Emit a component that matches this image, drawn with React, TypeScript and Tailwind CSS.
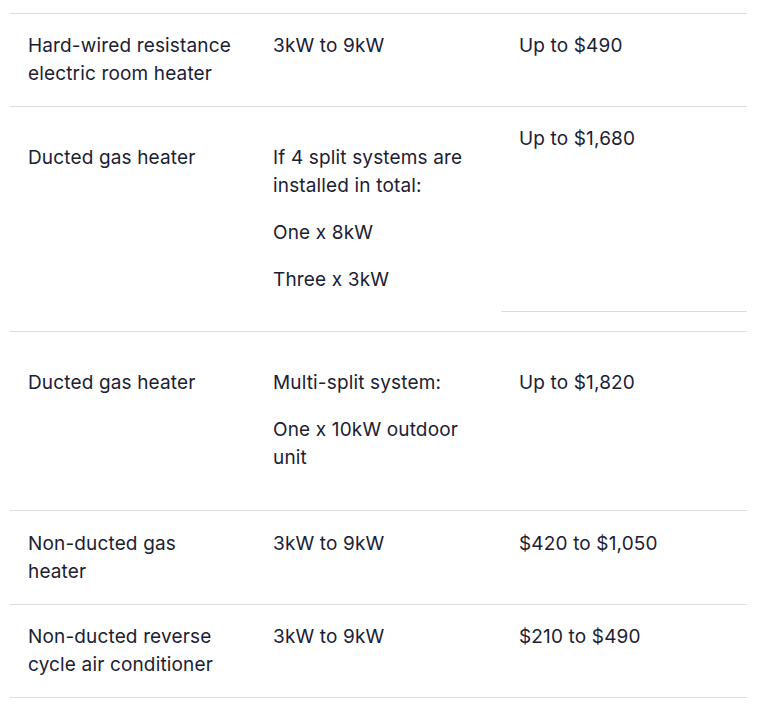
import React from "react";

const font = { fontFamily: "Inter, 'Noto Sans', sans-serif", letterSpacing: "0.15px" } as React.CSSProperties;

function Cell({ children, extra = "" }: { children: React.ReactNode; extra?: string }) {
  return <div className={`px-[18px] pt-[18px] ${extra || "pb-[18px]"}`}>{children}</div>;
}

export default function App() {
  return (
    <div className="bg-white w-[768px] h-[719px] pt-[13px] text-[#1b2133] text-[19px] leading-[28px]" style={font}>
      <div className="ml-[10px] w-[737px] border-b border-[#dcdcdc]">
        {/* Row 1 */}
        <div className="grid grid-cols-[245px_246px_246px] border-t border-[#dcdcdc]">
          <Cell>Hard-wired resistance electric room heater</Cell>
          <Cell>3kW to 9kW</Cell>
          <Cell>Up to $490</Cell>
        </div>
        {/* Row 2 */}
        <div className="grid grid-cols-[245px_246px_246px] border-t border-[#dcdcdc]">
          <Cell>
            <p className="my-[19px]">Ducted gas heater</p>
          </Cell>
          <Cell>
            <p className="my-[19px] pr-[10px]">If 4 split systems are installed in total:</p>
            <p className="my-[19px]">One x 8kW</p>
            <p className="my-[19px]">Three x 3kW</p>
          </Cell>
          <div className="flex flex-col pb-[19px]">
            <div className="flex-1 px-[18px] pt-[18px] border-b border-[#dcdcdc]">Up to $1,680</div>
          </div>
        </div>
        {/* Row 3 */}
        <div className="grid grid-cols-[245px_246px_246px] border-t border-[#dcdcdc]">
          <Cell extra="pb-[19px]">
            <p className="my-[19px]">Ducted gas heater</p>
          </Cell>
          <Cell extra="pb-[19px]">
            <p className="my-[19px]">Multi-split system:</p>
            <p className="my-[19px] pr-[10px]">One x 10kW outdoor unit</p>
          </Cell>
          <Cell extra="pb-[19px]">
            <p className="my-[19px]">Up to $1,820</p>
          </Cell>
        </div>
        {/* Row 4 */}
        <div className="grid grid-cols-[245px_246px_246px] border-t border-[#dcdcdc] pt-px">
          <Cell>Non-ducted gas heater</Cell>
          <Cell>3kW to 9kW</Cell>
          <Cell>$420 to $1,050</Cell>
        </div>
        {/* Row 5 */}
        <div className="grid grid-cols-[245px_246px_246px] border-t border-[#dcdcdc]">
          <Cell>Non-ducted reverse cycle air conditioner</Cell>
          <Cell>3kW to 9kW</Cell>
          <Cell>$210 to $490</Cell>
        </div>
      </div>
    </div>
  );
}
